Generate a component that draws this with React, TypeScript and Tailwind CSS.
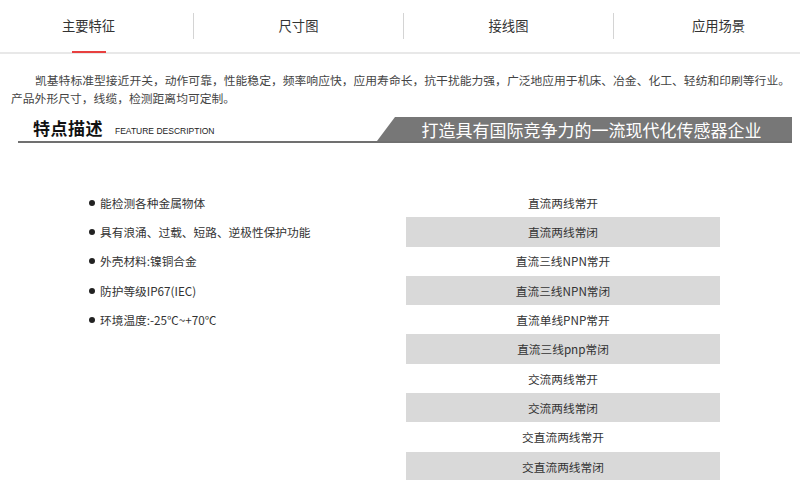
import React from "react";

const tabs = ["主要特征", "尺寸图", "接线图", "应用场景"];
const features = [
  "能检测各种金属物体",
  "具有浪涌、过载、短路、逆极性保护功能",
  "外壳材料:镍铜合金",
  "防护等级IP67(IEC)",
  "环境温度:-25℃~+70℃",
];
const types = [
  "直流两线常开",
  "直流两线常闭",
  "直流三线NPN常开",
  "直流三线NPN常闭",
  "直流单线PNP常开",
  "直流三线pnp常闭",
  "交流两线常开",
  "交流两线常闭",
  "交直流两线常开",
  "交直流两线常闭",
];

export default function App() {
  return (
    <div
      className="w-[800px] h-[480px] overflow-hidden bg-white text-[#333]"
      style={{ fontFamily: '"Noto Sans CJK SC", "Noto Sans", sans-serif' }}
    >
      {/* Tabs */}
      <div className="h-[54px] border-b-2 border-[#e8e8e8] overflow-visible">
        <div className="flex h-[52px] ml-[-16px]">
          {tabs.map((t, i) => (
            <React.Fragment key={t}>
              {i > 0 && <div className="self-center w-px h-[26px] bg-[#d4d4d4] shrink-0" />}
              <div className="relative w-[209px] shrink-0 flex items-center justify-center text-[13.3px] text-[#333]">
                <span>{t}</span>
                {i === 0 && (
                  <div className="absolute bottom-[-1px] left-1/2 -translate-x-1/2 w-[34px] h-[2px] bg-[#e8403f]" />
                )}
              </div>
            </React.Fragment>
          ))}
        </div>
      </div>

      {/* Intro paragraph */}
      <div className="mt-[17px] pl-[11px] text-[11.8px] leading-[18px] text-[#444] whitespace-nowrap">
        <div className="pl-[24px]">
          凯基特标准型接近开关，动作可靠，性能稳定，频率响应快，应用寿命长，抗干扰能力强，广泛地应用于机床、冶金、化工、轻纺和印刷等行业。
        </div>
        <div>产品外形尺寸，线缆，检测距离均可定制。</div>
      </div>

      {/* Heading bar */}
      <div className="mt-[10px] ml-[18px] w-[774px] h-[26px] flex items-end border-b-2 border-[#707070]">
        <div className="w-[359px] h-full flex items-end pl-[15px] pb-[2px]">
          <span className="text-[17px] leading-[22px] font-bold text-[#111] tracking-[0.5px]">特点描述</span>
          <span
            className="ml-[12px] mb-[3px] text-[8.5px] leading-[10px] text-[#222] whitespace-nowrap"
            style={{ fontFamily: '"Liberation Sans", "Noto Sans", sans-serif' }}
          >
            FEATURE DESCRIPTION
          </span>
        </div>
        <div
          className="w-[415px] h-[24px] bg-[#777777] flex items-center justify-center text-white text-[17px] leading-none pl-[14px]"
          style={{ clipPath: "polygon(18px 0, 100% 0, 100% 100%, 0 100%)" }}
        >
          打造具有国际竞争力的一流现代化传感器企业
        </div>
      </div>

      {/* Lists */}
      <div className="mt-[45px] flex">
        <div className="w-[406px] pl-[89px] text-[11.7px] text-[#333]">
          {features.map((f) => (
            <div key={f} className="h-[29.3px] flex items-center">
              <span className="w-[6px] h-[6px] rounded-full bg-[#222] mr-[5px] shrink-0" />
              <span>{f}</span>
            </div>
          ))}
        </div>
        <div className="w-[314px] text-[11.7px] text-[#333]">
          {types.map((t, i) => (
            <div
              key={t}
              className={
                "h-[29.3px] flex items-center justify-center " +
                (i % 2 === 1 ? "bg-[#d9d9d9]" : "bg-white")
              }
            >
              {t}
            </div>
          ))}
        </div>
      </div>
    </div>
  );
}
